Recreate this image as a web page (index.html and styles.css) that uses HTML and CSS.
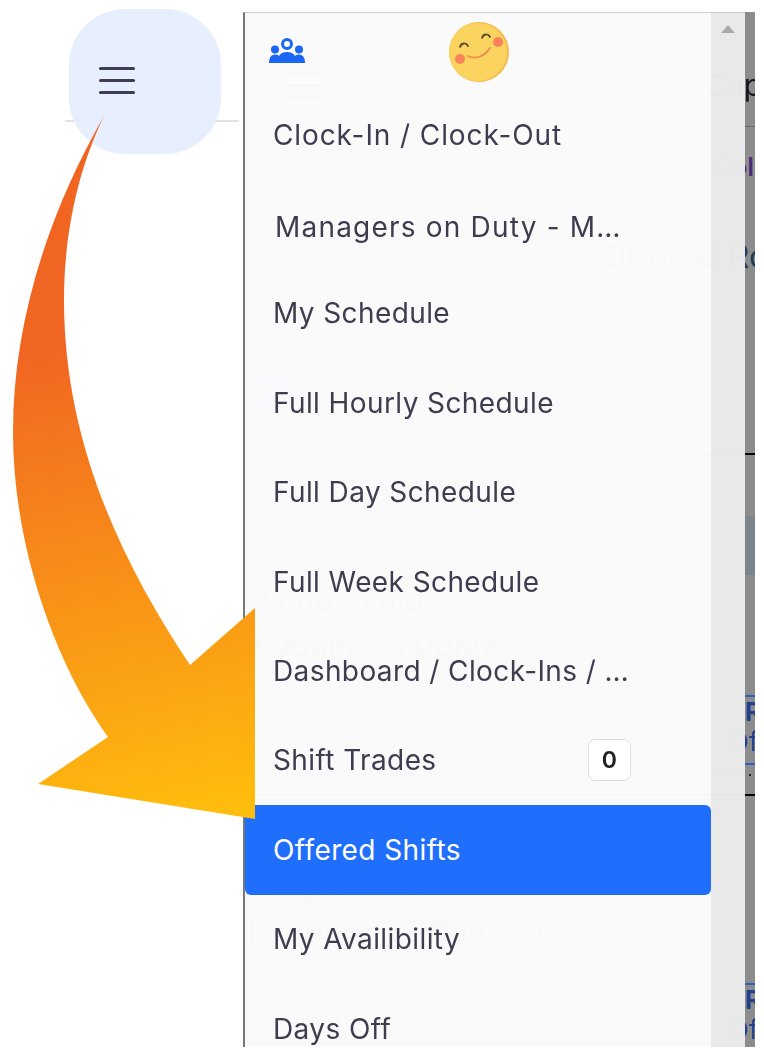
FILE: index.html
```html
<!DOCTYPE html>
<html lang="en">
<head>
<meta charset="UTF-8">
<meta name="viewport" content="width=device-width, initial-scale=1.0">
<title>Offered Shifts menu</title>
<link rel="stylesheet" href="styles.css">
</head>
<body>

<div class="stage">
    <div class="left">
        <div class="left-bar">
            <button class="menu-btn" aria-label="Menu">
                <span></span><span></span><span></span>
            </button>
        </div>
    </div>

    <div class="phone">
        <!-- dimmed page under the menu, shows through faintly -->
        <div class="behind">
            <div class="cap-row">
                <div class="ghost-burger"><span></span><span></span><span></span></div>
                <div class="cap-text">Captain</div>
            </div>
            <div class="see-row">
                <div class="ghost-cal"></div>
                <div class="see-text">See Dolores</div>
            </div>
            <div class="roster-row">Offered Roster</div>
            <div class="tab-row"><div class="ghost-tab"></div></div>
            <div class="gap-row"></div>
            <div class="banner"></div>
            <div class="shift-top first">
                <div class="shift-name">Diego Timid</div>
                <div class="shift-time">9:00am - 5:00pm <span class="chip">Cook</span></div>
            </div>
            <div class="action-row">
                <div class="act-r">Remove</div>
                <div class="act-o">Offer</div>
            </div>
            <div class="dot-row"></div>
            <div class="shift-top second">
                <div class="shift-name">Diego Timid</div>
                <div class="shift-time">1:00pm - 5:00pm <span class="chip">Cook</span></div>
            </div>
            <div class="action-row">
                <div class="act-r">Remove</div>
                <div class="act-o">Offer</div>
            </div>
        </div>

        <div class="panel">
            <div class="menu">
                <div class="menu-head">
                    <svg class="team-icon" viewBox="269 38 36 25" width="36" height="25">
                        <circle cx="287" cy="44" r="4.500" fill="none" stroke="#1a66f5" stroke-width="3"/>
                        <circle cx="275" cy="49.500" r="4" fill="#1a66f5"/>
                        <circle cx="299" cy="49.500" r="4" fill="#1a66f5"/>
                        <path d="M269 63c0-5 2-8.500 6-8.500 2 0 3 .6 4 1.400 1.500-2.400 4-3.900 8-3.900s6.500 1.500 8 3.900c1-.8 2-1.400 4-1.400 4 0 6 3.500 6 8.500z" fill="#1a66f5"/>
                    </svg>
                    <svg class="smile" viewBox="449 22 60 60" width="60" height="60">
                        <circle cx="479" cy="52" r="30" fill="#f6b94f"/>
                        <circle cx="478" cy="52" r="29" fill="#fbd35f"/>
                        <circle cx="460" cy="59" r="5" fill="#f9825a"/>
                        <circle cx="498" cy="42" r="5" fill="#f9825a"/>
                        <path d="M460 47c1-4 6-5 8-1M482 38c1-4 6-5 8-1" fill="none" stroke="#5f4a2c" stroke-width="1.800" stroke-linecap="round"/>
                        <path d="M468 56c8 4 17 0 22-8" fill="none" stroke="#f0894c" stroke-width="1.800" stroke-linecap="round"/>
                    </svg>
                </div>
                <a class="item wide">Clock-In / Clock-Out</a>
                <a class="item nudged">Managers on Duty - M…</a>
                <a class="item">My Schedule</a>
                <a class="item">Full Hourly Schedule</a>
                <a class="item">Full Day Schedule</a>
                <a class="item">Full Week Schedule</a>
                <a class="item">Dashboard / Clock-Ins / …</a>
                <a class="item">Shift Trades <span class="badge">0</span></a>
                <a class="item active">Offered Shifts</a>
                <a class="item">My Availibility</a>
                <a class="item">Days Off</a>
            </div>
            <div class="scrollbar"><div class="scroll-up"></div></div>
        </div>
    </div>
</div>

<!-- the big callout arrow sits over everything -->
<svg class="arrow" viewBox="0 0 764 1055" width="764" height="1055">
    <defs>
        <linearGradient id="arrowFill" gradientUnits="userSpaceOnUse" x1="90" y1="340" x2="190" y2="819">
            <stop offset="0" stop-color="#f16522"/>
            <stop offset="1" stop-color="#ffbd0d"/>
        </linearGradient>
    </defs>
    <path d="M104 116C50 210 13 320 13 432C13 550 58 668 108 737L38 784L255 819V608L190 665C120 560 64 440 64 300C64 230 80 165 104 116Z" fill="url(#arrowFill)"/>
</svg>

</body>
</html>
```

FILE: styles.css
```css
html, body {
    margin: 0;
    padding: 0;
    height: 1055px;
    overflow: hidden;
    background-color: #fff;
    font-family: Inter, "Noto Sans", sans-serif;
}
.stage {
    display: flex;
    align-items: flex-start;
}

/* left bit of the page with the hamburger */
.left {
    width: 243px;
    flex-shrink: 0;
}
.left-bar {
    height: 111px;
    width: 174px;
    margin-left: 65px;
    padding-top: 9px;
    border-bottom: 2px solid #e2e2e2;
}
.menu-btn {
    display: flex;
    flex-direction: column;
    align-items: center;
    justify-content: center;
    gap: 8.5px;
    width: 152px;
    height: 145px;
    margin-left: 4px;
    padding: 0 57px 2px 0;
    border: none;
    border-radius: 56px;
    background-color: #e7effe;
    position: relative;
}
.menu-btn span {
    display: block;
    width: 36px;
    height: 3.5px;
    flex-shrink: 0;
    border-radius: 2px;
    background-color: #3f3d56;
}

/* the phone screenshot */
.phone {
    position: relative;
    width: 512px;
    height: 1035px;
    margin-top: 12px;
    overflow: hidden;
}
.behind {
    position: absolute;
    top: 0;
    left: 0;
    width: 512px;
    height: 1035px;
    overflow: hidden;
    background-color: #8c8c8c;
    color: #15151f;
    font-size: 30px;
    white-space: nowrap;
    filter: blur(0.5px);
}
.cap-row {
    display: flex;
    align-items: center;
    height: 114px;
    border-bottom: 1px solid #6b6b6b;
}
.ghost-burger {
    display: flex;
    flex-direction: column;
    gap: 9px;
    margin-left: 42px;
    margin-top: 32px;
}
.ghost-burger span {
    display: block;
    width: 35px;
    height: 3px;
    background-color: #222;
}
.cap-text {
    margin-left: 385px;
    margin-top: 32px;
}
.see-row {
    display: flex;
    align-items: center;
    height: 79px;
    padding-left: 362px;
    gap: 12px;
    font-size: 25px;
    font-weight: 600;
    color: #4b2a7a;
}
.ghost-cal {
    width: 45px;
    height: 46px;
    border: 3px solid #1f6fb0;
    border-radius: 6px;
    box-sizing: border-box;
    flex-shrink: 0;
}
.roster-row {
    height: 100px;
    line-height: 100px;
    padding-left: 358px;
    font-size: 33px;
    color: #203a5a;
}
.tab-row {
    height: 149px;
    border-bottom: 2px solid #000;
    box-sizing: border-box;
    padding: 70px 0 0 14px;
}
.ghost-tab {
    width: 28px;
    height: 30px;
    background-color: #3a6fb0;
}
.gap-row {
    height: 61px;
}
.banner {
    height: 59px;
    background-color: #7a868c;
}
.shift-top {
    box-sizing: border-box;
    padding-left: 5px;
}
.shift-top.first {
    height: 120px;
    padding-top: 8px;
}
.shift-top.second {
    height: 187px;
    padding-top: 72px;
}
.shift-name {
    color: #203060;
    height: 45px;
    line-height: 36px;
    font-size: 31px;
}
.shift-time {
    margin-left: -5px;
    line-height: 36px;
    font-size: 31px;
    color: #333;
}
.chip {
    display: inline-block;
    padding: 0 18px;
    margin-left: 14px;
    font-size: 24px;
    border: 2px solid #666;
    border-radius: 14px;
}
.action-row {
    height: 70px;
    box-sizing: border-box;
    border-top: 2px solid #2f5fc0;
    border-bottom: 2px solid #2f5fc0;
    padding-left: 502px;
    font-size: 26px;
    line-height: 30px;
}
.act-r {
    font-weight: 700;
    color: #24408f;
}
.act-o {
    margin-left: -16px;
    color: #24408f;
}
.dot-row {
    height: 31px;
    box-sizing: border-box;
    border-bottom: 2px solid #000;
    background: radial-gradient(circle, #222 1px, transparent 1.500px) 0 8px / 6px 4px repeat-x;
}

/* menu on top */
.panel {
    position: relative;
    display: flex;
    width: 502px;
    height: 1035px;
    box-sizing: border-box;
    border-left: 2px solid #777;
    border-top: 1px solid #ccc;
}
.menu {
    width: 466px;
    flex-shrink: 0;
    background-color: rgba(253, 253, 253, 0.975);
    color: #3d3d50;
}
.menu-head {
    display: flex;
    align-items: flex-start;
    height: 77px;
    padding-left: 24px;
    gap: 144px;
}
.team-icon {
    margin-top: 25px;
}
.smile {
    margin-top: 9px;
}
.item {
    display: flex;
    align-items: center;
    justify-content: space-between;
    box-sizing: border-box;
    height: 89.4px;
    padding: 0 80px 0 28px;
    font-size: 28px;
    letter-spacing: 0.4px;
    white-space: nowrap;
    filter: blur(0.4px);
}
.item.wide {
    letter-spacing: 0.9px;
}
.item.nudged {
    padding-top: 5px;
    padding-left: 30px;
    letter-spacing: 1.2px;
}
.item.active {
    background-color: rgba(27, 107, 252, 0.975);
    color: #fff;
    border-radius: 6px;
    filter: none;
}
.badge {
    display: flex;
    align-items: center;
    justify-content: center;
    width: 43px;
    height: 42px;
    box-sizing: border-box;
    border: 1px solid #dcdcdc;
    border-radius: 7px;
    font-size: 23px;
    font-weight: 600;
    color: #222;
    background-color: #fff;
}
.scrollbar {
    width: 34px;
    background-color: rgba(236, 236, 236, 0.975);
}
.scroll-up {
    width: 0;
    height: 0;
    margin: 12px auto 0;
    border-left: 7px solid transparent;
    border-right: 7px solid transparent;
    border-bottom: 8px solid #a9a9a9;
}

.arrow {
    position: absolute;
    top: 0;
    left: 0;
}
```
